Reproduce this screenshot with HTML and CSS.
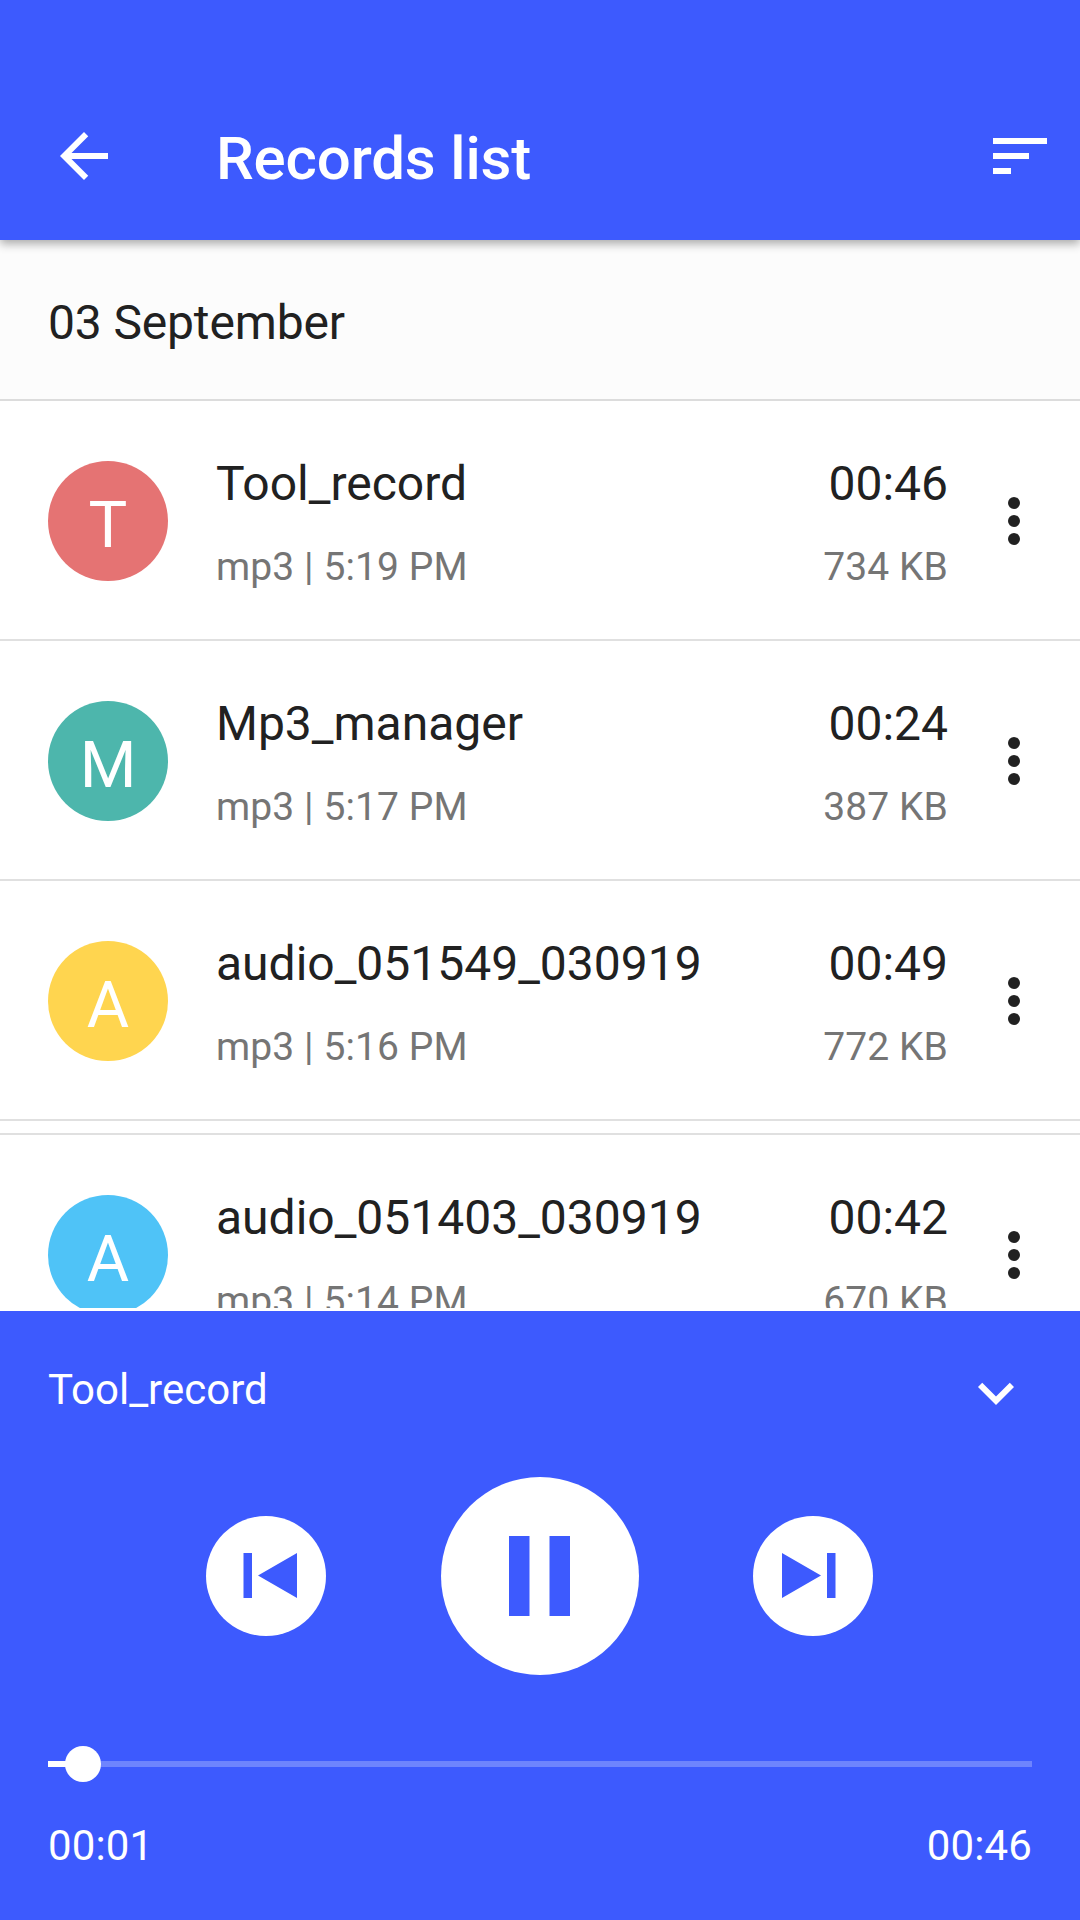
FILE: index.html
```html
<!DOCTYPE html>
<html lang="en">
<head>
<meta charset="utf-8">
<title>Records list</title>
<link rel="stylesheet" href="styles.css">
</head>
<body>
<div class="screen">
  <header class="app-bar">
    <svg class="back" viewBox="0 0 24 24"><path d="M20 11H7.83l5.59-5.59L12 4l-8 8 8 8 1.41-1.41L7.83 13H20z"/></svg>
    <h1 class="title">Records list</h1>
    <svg class="sort" viewBox="0 0 54 36"><path d="M0 0h54v6H0zM0 15h36v6H0zM0 30h18v6H0z"/></svg>
  </header>
  <main class="list">
    <h2 class="date">03 September</h2>
    <article class="record">
      <div class="avatar red">T</div>
      <div class="info"><div class="name">Tool_record</div><div class="meta">mp3 | 5:19 PM</div></div>
      <div class="stats"><div class="name">00:46</div><div class="meta">734 KB</div></div>
      <svg class="more" viewBox="0 0 12 48"><circle cx="6" cy="6" r="6"/><circle cx="6" cy="24" r="6"/><circle cx="6" cy="42" r="6"/></svg>
    </article>
    <article class="record">
      <div class="avatar teal">M</div>
      <div class="info"><div class="name">Mp3_manager</div><div class="meta">mp3 | 5:17 PM</div></div>
      <div class="stats"><div class="name">00:24</div><div class="meta">387 KB</div></div>
      <svg class="more" viewBox="0 0 12 48"><circle cx="6" cy="6" r="6"/><circle cx="6" cy="24" r="6"/><circle cx="6" cy="42" r="6"/></svg>
    </article>
    <article class="record">
      <div class="avatar yellow">A</div>
      <div class="info"><div class="name">audio_051549_030919</div><div class="meta">mp3 | 5:16 PM</div></div>
      <div class="stats"><div class="name">00:49</div><div class="meta">772 KB</div></div>
      <svg class="more" viewBox="0 0 12 48"><circle cx="6" cy="6" r="6"/><circle cx="6" cy="24" r="6"/><circle cx="6" cy="42" r="6"/></svg>
    </article>
    <div class="spacer"></div>
    <article class="record">
      <div class="avatar blue">A</div>
      <div class="info"><div class="name">audio_051403_030919</div><div class="meta">mp3 | 5:14 PM</div></div>
      <div class="stats"><div class="name">00:42</div><div class="meta">670 KB</div></div>
      <svg class="more" viewBox="0 0 12 48"><circle cx="6" cy="6" r="6"/><circle cx="6" cy="24" r="6"/><circle cx="6" cy="42" r="6"/></svg>
    </article>
  </main>
  <section class="player">
    <div class="now">
      <span>Tool_record</span>
      <svg class="chevron" viewBox="0 0 24 24"><path d="M16.59 8.59 12 13.17 7.41 8.59 6 10l6 6 6-6z"/></svg>
    </div>
    <div class="controls">
      <div class="round"><svg viewBox="0 0 120 120"><path d="M37.5 37h8.5v45h-8.5zM91 37v45L52 59.5z"/></svg></div>
      <div class="round large"><svg viewBox="0 0 198 198"><path d="M68 59h20.5v80H68zM108.5 59H129v80h-20.5z"/></svg></div>
      <div class="round"><svg viewBox="0 0 120 120"><path d="M82.500 37H74v45h8.500zM29 37v45l39-22.500z"/></svg></div>
    </div>
    <div class="track"><div class="played"></div><div class="thumb"></div></div>
    <div class="times"><span>00:01</span><span>00:46</span></div>
  </section>
</div>
</body>
</html>
```
FILE: styles.css
```css
* { box-sizing: border-box; }
body { margin: 0; font-family: Roboto, "Liberation Sans", sans-serif; color: #212121; }
h1, h2 { margin: 0; }
svg { display: block; flex: none; }

.screen { width: 1080px; height: 1920px; display: flex; flex-direction: column; overflow: hidden; background: #fff; }

.app-bar {
  flex: none; height: 240px; padding: 72px 33px 0 48px; position: relative; z-index: 1;
  display: flex; align-items: center; background: #3d5afe; color: #fff; fill: #fff;
  box-shadow: 0 4px 9px rgba(0, 0, 0, .32);
}
.back { width: 72px; height: 72px; }
.title { flex: 1; margin-left: 96px; padding-top: 5px; font-size: 60px; line-height: 70px; font-weight: 500; letter-spacing: -.15px; }
.sort { width: 54px; height: 36px; }

.list { flex: none; height: 1068px; overflow: hidden; }
.date {
  height: 161px; padding: 2px 48px 0; border-bottom: 2px solid #dcdcdc; background: #fcfcfc;
  font-size: 48px; line-height: 161px; font-weight: 400; letter-spacing: -.15px;
}
.record { height: 240px; padding: 0 60px 0 48px; display: flex; border-bottom: 2px solid #e0e0e0; }
.avatar {
  width: 120px; height: 120px; margin: 60px 48px 0 0; border-radius: 50%;
  color: #fff; font-size: 65px; line-height: 129px; text-align: center;
}
.red { background: #e57373; }
.teal { background: #4db6ac; }
.yellow { background: #ffd54f; }
.blue { background: #4fc3f7; }
.info { flex: 1; padding-top: 55px; }
.stats { padding-top: 55px; text-align: right; }
.name { height: 88px; font-size: 48px; line-height: 56px; }
.meta { font-size: 39px; line-height: 46px; letter-spacing: .1px; color: #757575; }
.more { width: 12px; height: 48px; margin: 96px 0 0 60px; fill: #212121; }
.spacer { height: 14px; border-bottom: 2px solid #e0e0e0; }

.player { flex: none; height: 609px; margin-top: 3px; padding: 43px 48px 0; background: #3d5afe; color: #fff; font-size: 42px; }
.now { height: 72px; display: flex; justify-content: space-between; line-height: 72px; }
.chevron { width: 72px; height: 72px; margin-top: 3px; fill: #fff; }
.controls { height: 198px; margin: 51px 0 0 158px; display: flex; align-items: center; gap: 114.500px; }
.round { width: 120px; height: 120px; border-radius: 50%; background: #fff; fill: #3d5afe; }
.large { width: 198px; height: 198px; }
.track { height: 6px; margin-top: 86px; position: relative; background: #6e84fe; }
.played { width: 35px; height: 6px; background: #fff; }
.thumb { position: absolute; left: 17px; top: -15px; width: 36px; height: 36px; border-radius: 50%; background: #fff; }
.times { margin-top: 54px; display: flex; justify-content: space-between; line-height: 50px; letter-spacing: .15px; }
```
